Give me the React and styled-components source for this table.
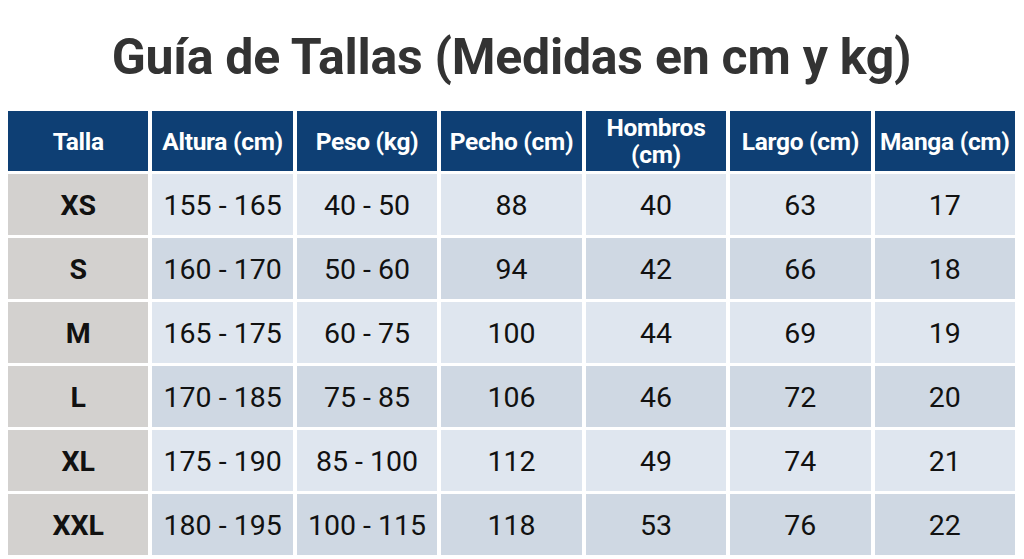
import styled, { createGlobalStyle } from "styled-components";

const GlobalStyle = createGlobalStyle`
  body {
    margin: 0;
    background: #ffffff;
    font-family: Roboto, "Liberation Sans", sans-serif;
  }
`;

const Page = styled.div`
  width: 1024px;
  height: 559px;
  overflow: hidden;
  padding: 27px 9px 0 8px;
  box-sizing: border-box;
`;

const Title = styled.h1`
  margin: 0;
  height: 60px;
  line-height: 60px;
  text-align: center;
  font-size: 50px;
  font-weight: 700;
  color: #333333;
  letter-spacing: -0.25px;
`;

const Table = styled.div`
  margin-top: 24px;
  display: grid;
  grid-template-columns: repeat(7, 1fr);
  grid-template-rows: 60px;
  grid-auto-rows: 61px;
  column-gap: 4px;
  row-gap: 3px;
`;

const HeadCell = styled.div`
  background: #0e3f74;
  color: #ffffff;
  font-weight: 700;
  font-size: 24.5px;
  line-height: 27px;
  letter-spacing: -0.3px;
  display: flex;
  align-items: center;
  justify-content: center;
  text-align: center;
  white-space: nowrap;
`;

const Cell = styled.div`
  background: ${(p) => (p.$size ? "#d3d1cf" : p.$alt ? "#cfd8e3" : "#dfe6ef")};
  color: #111111;
  font-size: 28.5px;
  font-weight: ${(p) => (p.$size ? 700 : 400)};
  padding-top: 2px;
  display: flex;
  align-items: center;
  justify-content: center;
`;

const heads = ["Talla", "Altura (cm)", "Peso (kg)", "Pecho (cm)", ["Hombros", "(cm)"], "Largo (cm)", "Manga (cm)"];

const rows = [
  ["XS", "155 - 165", "40 - 50", "88", "40", "63", "17"],
  ["S", "160 - 170", "50 - 60", "94", "42", "66", "18"],
  ["M", "165 - 175", "60 - 75", "100", "44", "69", "19"],
  ["L", "170 - 185", "75 - 85", "106", "46", "72", "20"],
  ["XL", "175 - 190", "85 - 100", "112", "49", "74", "21"],
  ["XXL", "180 - 195", "100 - 115", "118", "53", "76", "22"],
];

export default function App() {
  return (
    <Page>
      <GlobalStyle />
      <Title>Guía de Tallas (Medidas en cm y kg)</Title>
      <Table>
        {heads.map((h, i) => (
          <HeadCell key={i}>
            {Array.isArray(h) ? (
              <span>
                {h[0]}
                <br />
                {h[1]}
              </span>
            ) : (
              h
            )}
          </HeadCell>
        ))}
        {rows.map((r, ri) =>
          r.map((v, ci) => (
            <Cell key={ri + "-" + ci} $size={ci === 0} $alt={ri % 2 === 1}>
              {v}
            </Cell>
          ))
        )}
      </Table>
    </Page>
  );
}
